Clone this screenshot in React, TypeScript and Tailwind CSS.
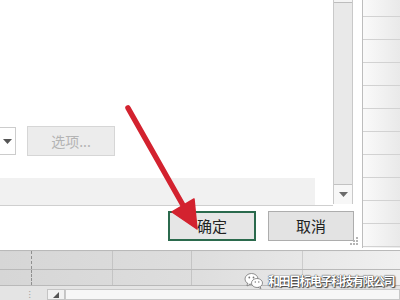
import React from "react";

const cjk = { fontFamily: '"Noto Sans CJK SC", "Noto Sans", sans-serif' };

const rightRows = [17, 23, 23, 23, 23, 23, 23, 23, 23, 23, 23];

function Scrollbar() {
  return (
    <div className="flex h-[204px] w-[20px] flex-col border-x border-[#c9c9c9] bg-[#e9e9e9]">
      <div className="h-[3px] border-b border-[#bdbdbd] bg-[#f4f4f4]" />
      <div className="flex-1" />
      <div className="flex h-[20px] items-center justify-center border-t border-[#c2c2c2] bg-[#f7f7f7]">
        <svg width="9" height="5" viewBox="0 0 9 5">
          <path d="M0 0h9L4.5 5z" fill="#6b6b6b" />
        </svg>
      </div>
    </div>
  );
}

function Dialog() {
  return (
    <div className="flex h-[248px] w-[362px] flex-col bg-white shadow-[1px_1px_3px_rgba(0,0,0,0.15)]">
      <div className="flex h-[206px]">
        <div className="flex w-[333px] flex-col border-b border-[#cfcfcf]">
          <div className="h-[126px]" />
          <div className="flex h-[30px] items-center gap-[11px]">
            <div className="flex h-[28px] w-[16px] items-center justify-center border border-l-0 border-[#cccccc] bg-white">
              <svg width="9" height="5" viewBox="0 0 9 5">
                <path d="M0 0h9L4.5 5z" fill="#555" />
              </svg>
            </div>
            <div
              className="flex h-[30px] w-[88px] items-center justify-center border border-[#d6d6d6] bg-[#ececec] text-[14px] text-[#b4b4b4]"
              style={cjk}
            >
              选项...
            </div>
          </div>
          <div className="h-[22px]" />
          <div className="h-[27px] w-[315px] bg-[#f1f1f1]" />
        </div>
        <Scrollbar />
      </div>
      <div className="flex h-[42px] items-start pt-[5px]">
        <div
          className="ml-[168px] flex h-[30px] w-[88px] items-center justify-center border-2 border-[#2b6a4d] bg-[#e6e6e6] text-[15px] text-[#222]"
          style={cjk}
        >
          确定
        </div>
        <div
          className="ml-[12px] flex h-[30px] w-[86px] items-center justify-center border border-[#adadad] bg-[#e3e3e3] text-[15px] text-[#222]"
          style={cjk}
        >
          取消
        </div>
        <div className="ml-[-4px] mt-[26px] grid grid-cols-3 gap-[1px]">
          {[0, 1, 2, 3, 4, 5, 6, 7, 8].map((i) => (
            <div
              key={i}
              className={i === 0 || i === 1 || i === 3 ? "h-[2px] w-[2px]" : "h-[2px] w-[2px] bg-[#b5b5b5]"}
            />
          ))}
        </div>
      </div>
    </div>
  );
}

function RightColumn() {
  return (
    <div className="flex h-[248px] flex-1 flex-col border-l border-[#bdbdbd] bg-gradient-to-r from-[#fafafa] to-[#e9e9e9]">
      {rightRows.map((h, i) => (
        <div key={i} className="shrink-0 border-b border-[#d2d2d2]" style={{ height: h }} />
      ))}
    </div>
  );
}

function BottomGrid() {
  return (
    <div className="flex h-[52px] flex-col bg-gradient-to-r from-[#d6d6d6] via-[#dedede] to-[#f0f0f0]">
      <div className="h-[3px] border-b border-[#b9b9b9] bg-white" />
      {[19, 16].map((h, r) => (
        <div key={r} className="flex border-b border-[#b9b9b9]" style={{ height: h }}>
          <div className="w-[32px] border-r border-dashed border-[#8f8f8f]" />
          <div className="w-[81px] border-r border-[#c4c4c4]" />
          <div className="w-[79px] border-r border-[#c4c4c4]" />
          <div className="w-[111px] border-r border-[#cccccc]" />
          <div className="flex-1" />
        </div>
      ))}
      <div className="flex flex-1 items-end bg-[#e4e4e4]">
        <div className="flex h-[12px] w-[47px] items-center justify-end pr-[16px] text-[9px] leading-none text-[#9a9a9a]">
          ⁝
        </div>
        <div className="flex h-[11px] w-[18px] items-center justify-center border border-[#c4c4c4] bg-[#f2f2f2]">
          <svg width="6" height="6" viewBox="0 0 6 6">
            <path d="M6 0v6H0z" fill="#555" />
          </svg>
        </div>
        <div className="h-[11px] flex-1 border border-[#c8c8c8] bg-[#f7f7f7]" />
      </div>
    </div>
  );
}

function Arrow() {
  return (
    <svg className="pointer-events-none absolute left-0 top-0" width="400" height="300" viewBox="0 0 400 300">
      <line x1="128" y1="108" x2="184" y2="207" stroke="#d3222f" strokeWidth="5.5" strokeLinecap="round" />
      <path d="M197 229 L172 212 L194 199 Z" fill="#d3222f" stroke="#d3222f" strokeWidth="1.5" strokeLinejoin="round" />
    </svg>
  );
}

function Watermark() {
  return (
    <div className="absolute left-[244px] top-[272px] flex items-center gap-[4px] whitespace-nowrap">
      <svg width="20" height="17" viewBox="0 0 20 17">
        <ellipse cx="7.5" cy="7" rx="6.5" ry="5.5" fill="#fff" stroke="#777" strokeWidth="0.8" />
        <path d="M3.5 11 L3 14 L6.5 12" fill="#fff" stroke="#777" strokeWidth="0.8" />
        <ellipse cx="13" cy="11" rx="5.5" ry="4.5" fill="#fff" stroke="#777" strokeWidth="0.8" />
        <path d="M16 14.5 L17 16.5 L14 15.3" fill="#fff" stroke="#777" strokeWidth="0.8" />
        <circle cx="5.3" cy="5.5" r="0.9" fill="#777" />
        <circle cx="9.5" cy="5.5" r="0.9" fill="#777" />
        <circle cx="11.3" cy="10" r="0.7" fill="#777" />
        <circle cx="14.8" cy="10" r="0.7" fill="#777" />
      </svg>
      <span
        className="whitespace-nowrap text-[12px] font-bold leading-none tracking-[-1.5px] text-white [text-shadow:0_0_1px_#333,0_0_1px_#333,1px_1px_1px_#444]"
        style={cjk}
      >
        和田目标电子科技有限公司
      </span>
    </div>
  );
}

export default function App() {
  return (
    <div className="relative h-[300px] w-[400px] overflow-hidden bg-white">
      <div className="flex">
        <Dialog />
        <RightColumn />
      </div>
      <BottomGrid />
      <Arrow />
      <Watermark />
    </div>
  );
}
